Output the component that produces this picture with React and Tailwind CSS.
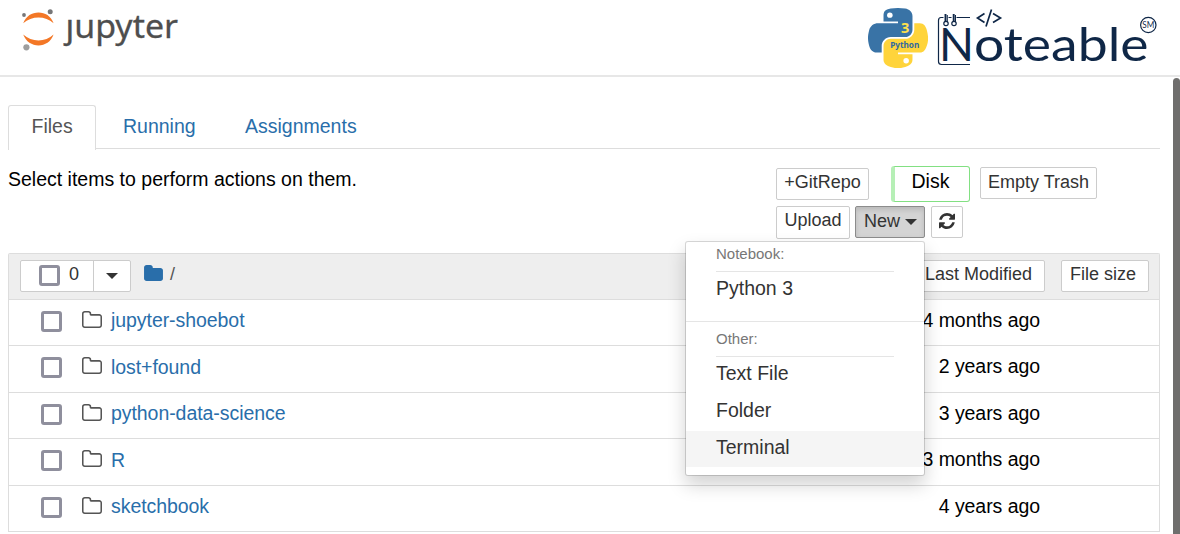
import React from "react";

const FOLDER =
  "M1664 480v704q0 92-66 158t-158 66h-1216q-92 0-158-66t-66-158v-960q0-92 66-158t158-66h320q92 0 158 66t66 158v32h672q92 0 158 66t66 158z";
const FOLDER_HOLE =
  "M1536 1184v-704q0-40-28-68t-68-28h-704q-40 0-68-28t-28-68v-64q0-40-28-68t-68-28h-320q-40 0-68 28t-28 68v960q0 40 28 68t68 28h1216q40 0 68-28t28-68z";
const REFRESH =
  "M1511 928q0 5-1 7-64 268-268 434.5t-478 166.5q-146 0-282.5-55t-243.5-157l-129 129q-19 19-45 19t-45-19-19-45v-448q0-26 19-45t45-19h448q26 0 45 19t19 45-19 45l-137 137q71 66 161 102t187 36q134 0 250-65t186-179q11-17 53-117 8-23 30-23h192q13 0 22.5 9.5t9.5 22.5zm25-800v448q0 26-19 45t-45 19h-448q-26 0-45-19t-19-45 19-45l138-138q-148-137-349-137-134 0-250 65t-186 179q-11 17-53 117-8 23-30 23h-199q-13 0-22.5-9.5t-9.5-22.5v-7q65-268 270-434.5t480-166.5q146 0 284 55.5t245 156.5l130-129q19-19 45-19t45 19 19 45z";

const files = [
  { name: "jupyter-shoebot", time: "4 months ago", height: "h-[46px]", leading: "leading-[18px]" },
  { name: "lost+found", time: "2 years ago", height: "h-[47px]", leading: "leading-[20px]" },
  { name: "python-data-science", time: "3 years ago", height: "h-[46px]", leading: "leading-[18px]" },
  { name: "R", time: "3 months ago", height: "h-[47px]", leading: "leading-[20px]" },
  { name: "sketchbook", time: "4 years ago", height: "h-[46px]", leading: "leading-[18px]" },
];

function JupyterLogo() {
  return (
    <svg width="170" height="60" viewBox="15 0 170 60" className="block overflow-visible">
      <path d="M23.2 23.2C26 15.8 32 12.4 38.5 12.4S51 15.8 53.6 23.2C49.500 19.200 44 17.400 38.500 17.400S27.500 19.200 23.200 23.200Z" fill="#f37726" />
      <path d="M23.2 34.600C26 42 32 45.400 38.500 45.400S51 42 53.600 34.600C49.500 38.600 44 40.400 38.500 40.400S27.500 38.600 23.200 34.600Z" fill="#f37726" />
      <circle cx="50.200" cy="11.700" r="2.500" fill="#767677" />
      <circle cx="24" cy="15" r="1.900" fill="#767677" />
      <circle cx="26.400" cy="47.300" r="3.100" fill="#9e9e9e" />
      <text x="65.500" y="37.500" textLength="112.500" lengthAdjust="spacingAndGlyphs" fontSize="33.500" fontFamily="'Noto Sans', sans-serif" fill="#4e4e4e" stroke="#4e4e4e" strokeWidth="0.300">
        jupyter
      </text>
      <rect x="64" y="6" width="11" height="12" fill="#fff" />
    </svg>
  );
}

function PythonLogo() {
  return (
    <svg width="60" height="60" viewBox="0 0 111 112" preserveAspectRatio="none" className="block">
      <path
        fill="#3973a6"
        d="M54.920 0C50.340 .02 45.960 .41 42.110 1.090C30.760 3.100 28.700 7.290 28.700 15.030V25.250H55.510V28.660H18.640C10.850 28.660 4.020 33.340 1.890 42.250C-.57 52.460-.68 58.840 1.890 69.500C3.790 77.440 8.350 83.090 16.140 83.090H25.360V70.840C25.360 61.990 33.010 54.190 42.110 54.190H68.890C76.340 54.190 82.290 48.050 82.290 40.560V15.030C82.290 7.770 76.160 2.310 68.890 1.090C64.280 .33 59.500-.02 54.920 0Z"
      />
      <path
        fill="#ffd43b"
        d="M85.640 28.660V40.560C85.640 49.790 77.810 57.560 68.890 57.560H42.110C34.770 57.560 28.700 63.840 28.700 71.190V96.720C28.700 103.980 35.020 108.260 42.110 110.340C50.590 112.840 58.730 113.290 68.890 110.340C75.640 108.390 82.290 104.460 82.290 96.720V86.500H55.510V83.090H95.700C103.490 83.090 106.400 77.660 109.110 69.500C111.910 61.100 111.790 53.020 109.110 42.250C107.180 34.490 103.500 28.660 95.700 28.660Z"
      />
      <circle cx="40.400" cy="13.300" r="5.100" fill="#fff" />
      <circle cx="70.600" cy="98.400" r="5.100" fill="#fff" />
      <text x="61" y="47" fontSize="27" fontWeight="700" fontFamily="'Noto Sans', sans-serif" fill="#ffe14d">3</text>
      <text x="41" y="75" fontSize="16" textLength="54" lengthAdjust="spacingAndGlyphs" fontWeight="700" fontFamily="'Noto Sans', sans-serif" fill="#3268a0">Python</text>
    </svg>
  );
}

function NoteableLogo() {
  return (
    <svg width="224" height="70" viewBox="936 0 224 70" className="block overflow-visible" fill="none" stroke="#0f2747">
      <path d="M970 17.500H956.500M951.500 17.500H948.500M943.500 17.500H941Q938.500 17.500 938.500 20.500V61.500Q938.500 64.500 941.500 64.500H970" strokeWidth="1.200" />
      <path d="M945.500 14V22M953.700 14V22" strokeWidth="1.900" />
      <path d="M947.300 15V22M955.500 15V22" strokeWidth="1" />
      <circle cx="946" cy="23.500" r="2.200" strokeWidth="1.200" />
      <circle cx="954" cy="23.500" r="2.200" strokeWidth="1.200" />
      <path d="M984.500 13.500L977.500 18L984.500 22.500M993 13.500L1000.500 18L993 22.500M991.500 9.500L986 26.500" strokeWidth="1.700" />
      <g fill="#0f2747" stroke="none" fontFamily="Lato, sans-serif">
        <text x="939" y="61.200" fontSize="46" textLength="35" lengthAdjust="spacingAndGlyphs">N</text>
        <text x="974" y="61.200" fontSize="47" textLength="174.500" lengthAdjust="spacingAndGlyphs">oteable</text>
        <text x="1142.300" y="28.200" fontSize="8.500" textLength="12" lengthAdjust="spacingAndGlyphs">SM</text>
      </g>
      <circle cx="1148.300" cy="25" r="7.700" strokeWidth="1.200" />
    </svg>
  );
}

function Checkbox() {
  return <span className="block h-[21px] w-[21px] shrink-0 rounded-[3px] border-[3px] border-[#8f8f9d] bg-white" />;
}

function Caret() {
  return (
    <svg width="12" height="6" viewBox="0 0 12 6" className="shrink-0">
      <path d="M0 0H12L6 6Z" fill="#333" />
    </svg>
  );
}

function Button({ className, children }) {
  return (
    <button className={"flex shrink-0 justify-center rounded-[2px] border border-[#ccc] bg-white text-lg whitespace-nowrap text-[#333] " + className}>
      {children}
    </button>
  );
}

function NewMenu() {
  return (
    <div className="absolute top-[35px] left-[-170px] z-10 h-[235px] w-[240px] rounded-[3px] border border-black/15 bg-white bg-clip-padding text-[#333] shadow-[0_9px_18px_rgba(0,0,0,0.175)]">
      <div className="mx-[30px] h-[30px] border-b border-[#e5e5e5] text-[15px] leading-[24px] text-[#777]">Notebook:</div>
      <div className="h-[50px] border-b border-[#e5e5e5] px-[30px] leading-[33px]">Python 3</div>
      <div className="mx-[30px] mt-[5px] h-[30px] border-b border-[#e5e5e5] text-[15px] leading-[24px] text-[#777]">Other:</div>
      <div className="h-[37px] px-[30px] leading-[33px]">Text File</div>
      <div className="h-[37px] px-[30px] leading-[33px]">Folder</div>
      <div className="h-[36px] bg-[#f5f5f5] px-[30px] leading-[33px]">Terminal</div>
    </div>
  );
}

export default function App() {
  return (
    <div className="flex h-[534px] w-[1180px] flex-col overflow-hidden bg-white font-['Liberation_Sans',Arial,sans-serif] text-[19.5px] text-black">
      <header className="flex h-[77px] shrink-0 items-start justify-between border-b-2 border-[#e7e7e7] pl-[15px]">
        <JupyterLogo />
        <div className="flex items-start pr-5">
          <div className="pt-2"><PythonLogo /></div>
          <div className="pl-2"><NoteableLogo /></div>
        </div>
      </header>
      <div className="flex min-h-0 flex-1 justify-between">
        <main className="w-[1160px] pt-7 pl-2">
          <nav className="flex h-11 border-b border-[#ddd] leading-[42px] text-[#296eaa]">
            <a className="h-[45px] w-[88px] shrink-0 rounded-t-[3px] border border-b-0 border-[#ddd] bg-white pl-[22.5px] leading-[40px] text-[#555]">Files</a>
            <a className="w-[122px] pl-[27px]">Running</a>
            <a className="pl-[27px]">Assignments</a>
          </nav>
          <div className="flex h-[104px] justify-between">
            <p className="pt-[17px] leading-[27px]">Select items to perform actions on them.</p>
            <div className="w-[384px] pt-[17px]">
              <div className="flex h-10 items-start">
                <Button className="mt-0.5 h-8 w-[93px] leading-[27px]">+GitRepo</Button>
                <button className="ml-[22px] flex h-9 w-[79px] justify-center rounded-[3px] border border-l-4 border-[#82e082] border-l-[#b6efb6] bg-white pr-[3px] leading-[29px]">Disk</button>
                <Button className="mt-px ml-2.5 h-8 w-[117px] leading-[29px]">Empty Trash</Button>
              </div>
              <div className="flex items-start">
                <Button className="h-[33px] w-[74px] leading-[27px]">Upload</Button>
                <div className="relative ml-[5px]">
                  <button className="flex h-8 w-[70px] items-center gap-[5px] rounded-[2px] border border-[#8c8c8c] bg-[#d4d4d4] pl-2 text-lg leading-[27px] text-[#333] shadow-[inset_0_3px_5px_rgba(0,0,0,0.125)]">
                    <span className="pb-0.5">New</span>
                    <Caret />
                  </button>
                  <NewMenu />
                </div>
                <Button className="ml-1.5 h-8 w-8 items-center pb-[3px]">
                  <svg width="16" height="16" viewBox="0 0 1536 1536" fill="#333"><path d={REFRESH} /></svg>
                </Button>
              </div>
            </div>
          </div>
          <section className="rounded-t-[2px] border border-b-0 border-[#ddd]">
            <div className="flex h-[46px] items-start border-b border-[#ddd] bg-[#eee] pt-1.5 pl-[11px]">
              <div className="flex h-8 w-[111px] rounded-[2px] border border-[#ccc] bg-white text-lg text-[#333]">
                <div className="flex w-[73px] gap-[9px] border-r border-[#ccc] pt-1 pl-[18px]">
                  <Checkbox />
                  <span className="leading-[19px]">0</span>
                </div>
                <div className="flex flex-1 items-center justify-center"><Caret /></div>
              </div>
              <svg width="19" height="16" viewBox="0 0 1664 1408" className="mt-[5px] ml-[13px]" fill="#296eaa"><path d={FOLDER} /></svg>
              <span className="ml-[7px] text-lg leading-[28px] text-[#555]">/</span>
              <div className="ml-auto flex items-start gap-4 pr-2.5">
                <Button className="h-8 w-[129px] leading-[27px]"><span className="pr-1">Last Modified</span></Button>
                <Button className="h-8 w-[88px] leading-[27px]"><span className="pr-1">File size</span></Button>
              </div>
            </div>
            {files.map((f) => (
              <div key={f.name} className={"flex items-start border-b border-[#ddd] pt-[11px] pl-8 tracking-[-0.06px] " + f.height + " " + f.leading}>
                <Checkbox />
                <svg width="20" height="17" viewBox="0 0 1664 1408" className="ml-5" fill="#555"><path fillRule="evenodd" d={FOLDER + FOLDER_HOLE} /></svg>
                <span className="ml-[9px] text-[#296eaa]">{f.name}</span>
                <span className="ml-auto pr-[119px] leading-[18px]">{f.time}</span>
              </div>
            ))}
          </section>
        </main>
        <div className="mt-px w-[7px] rounded-t-[4px] bg-[#6f6e6d]" />
      </div>
    </div>
  );
}
